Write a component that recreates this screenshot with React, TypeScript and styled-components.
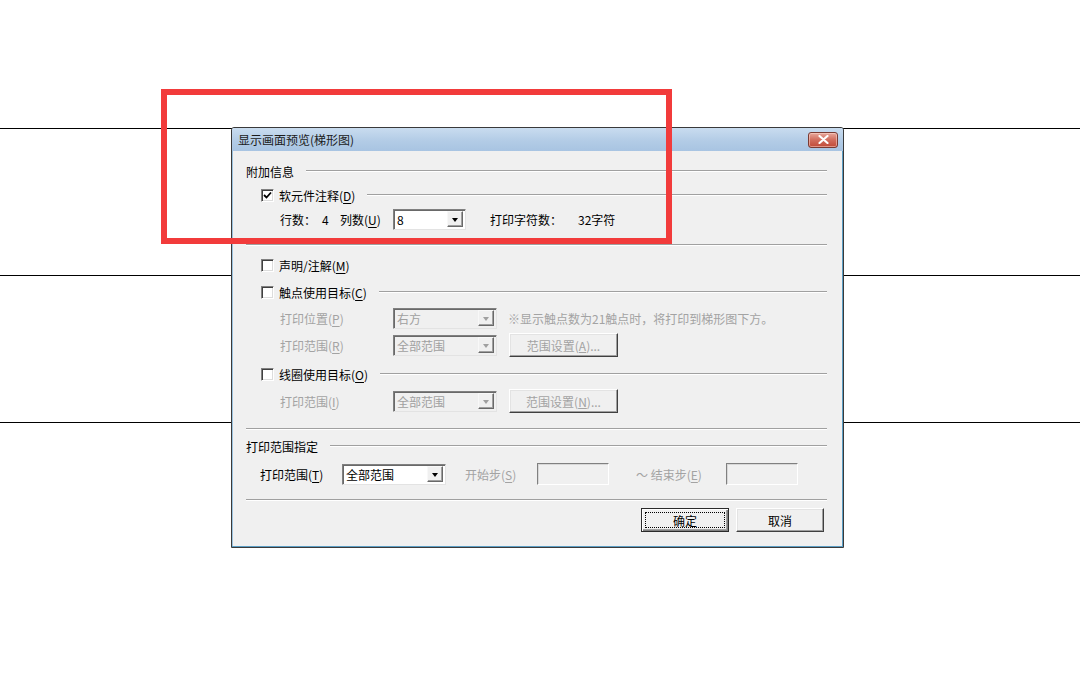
import React from "react";
import styled, { createGlobalStyle, css } from "styled-components";

const GlobalStyle = createGlobalStyle`
    html, body {
        margin: 0;
        padding: 0;
        background: #ffffff;
    }
    body {
        font-family: "Noto Sans CJK SC", "Liberation Sans", sans-serif;
        font-size: 12px;
        color: #000;
    }
`;

const Page = styled.div`
    position: relative;
    width: 1080px;
    height: 683px;
    overflow: hidden;
    background:
        linear-gradient(#000, #000) 0 128px / 100% 1px no-repeat,
        linear-gradient(#000, #000) 0 275px / 100% 1px no-repeat,
        linear-gradient(#000, #000) 0 422px / 100% 1px no-repeat,
        #ffffff;
`;

const Highlight = styled.div`
    position: absolute;
    left: 161px;
    top: 89px;
    width: 511px;
    height: 155px;
    box-sizing: border-box;
    border: 6px solid #f23b3b;
    z-index: 2;
    pointer-events: none;
`;

const Window = styled.div`
    position: absolute;
    left: 231px;
    top: 127px;
    width: 613px;
    height: 421px;
    box-sizing: border-box;
    border: 1px solid #3a3a3a;
    border-radius: 3px 3px 0 0;
    background: #f0f0f0;
    box-shadow: inset -1px -1px 0 #5c9ec4, inset 1px 0 0 #9cc3de;
    display: flex;
    flex-direction: column;
`;

const TitleBar = styled.div`
    height: 23px;
    flex-shrink: 0;
    display: flex;
    align-items: center;
    padding: 0 5px 0 6px;
    background: linear-gradient(#c9dcef, #b3cce6 55%, #a8c4e2);
    border-radius: 2px 2px 0 0;
`;

const Title = styled.span`
    flex: 1;
    font-size: 12px;
    color: #1b1b1b;
    line-height: 23px;
`;

const CloseButton = styled.div`
    width: 30px;
    height: 16px;
    box-sizing: border-box;
    border: 1px solid #7a3a32;
    border-radius: 3px;
    background: linear-gradient(#e8a89c, #d16c5c 50%, #c14a38);
    display: flex;
    align-items: center;
    justify-content: center;
    box-shadow: inset 0 0 0 1px rgba(255, 220, 210, 0.5);
`;

const Body = styled.div`
    flex: 1;
    padding: 10px 16px 0 14px;
    display: flex;
    flex-direction: column;
`;

const Row = styled.div<{ $h?: number; $mt?: number; $indent?: number; $end?: boolean }>`
    display: flex;
    align-items: center;
    height: ${p => p.$h ?? 20}px;
    margin-top: ${p => p.$mt ?? 0}px;
    padding-left: ${p => p.$indent ?? 0}px;
    flex-shrink: 0;
    ${p => p.$end && css`
        justify-content: flex-end;
        padding-right: 3px;
    `}
`;

const GroupLine = styled.div`
    flex: 1;
    height: 0;
    margin-left: 12px;
    border-top: 1px solid #a0a0a0;
    border-bottom: 1px solid #ffffff;
`;

const Separator = styled.div<{ $mt: number }>`
    height: 0;
    margin-top: ${p => p.$mt}px;
    border-top: 1px solid #a0a0a0;
    border-bottom: 1px solid #ffffff;
    flex-shrink: 0;
`;

const Label = styled.span<{ $disabled?: boolean; $w?: number }>`
    white-space: nowrap;
    color: ${p => (p.$disabled ? "#a3a3a3" : "#000")};
    ${p => p.$w !== undefined && css`
        width: ${p.$w}px;
        flex-shrink: 0;
    `}
    u {
        text-decoration: underline;
        text-underline-offset: 2px;
    }
`;

const Box = styled.span`
    width: 13px;
    height: 13px;
    box-sizing: border-box;
    margin-right: 5px;
    flex-shrink: 0;
    background: #ffffff;
    border-top: 1px solid #808080;
    border-left: 1px solid #808080;
    border-right: 1px solid #ffffff;
    border-bottom: 1px solid #ffffff;
    box-shadow: inset 1px 1px 0 #404040, inset -1px -1px 0 #dcdcdc;
    display: flex;
    align-items: center;
    justify-content: center;
`;

const Combo = styled.div<{ $w: number; $disabled?: boolean }>`
    width: ${p => p.$w}px;
    height: 21px;
    box-sizing: border-box;
    flex-shrink: 0;
    display: flex;
    align-items: center;
    border-top: 1px solid #808080;
    border-left: 1px solid #808080;
    border-right: 1px solid #e3e3e3;
    border-bottom: 1px solid #e3e3e3;
    box-shadow: inset 1px 1px 0 #696969;
    background: ${p => (p.$disabled ? "#f0f0f0" : "#ffffff")};
    color: ${p => (p.$disabled ? "#a0a0a0" : "#000")};
    padding: 2px 2px 2px 3px;
`;

const ComboText = styled.span`
    flex: 1;
    white-space: nowrap;
    line-height: 15px;
`;

const ComboArrow = styled.span<{ $disabled?: boolean }>`
    width: 16px;
    height: 16px;
    box-sizing: border-box;
    background: #f0f0f0;
    border-top: 1px solid #f8f8f8;
    border-left: 1px solid #f8f8f8;
    border-right: 1px solid #696969;
    border-bottom: 1px solid #696969;
    box-shadow: inset -1px -1px 0 #a0a0a0;
    display: flex;
    align-items: center;
    justify-content: center;
    &::after {
        content: "";
        border-left: 3px solid transparent;
        border-right: 3px solid transparent;
        border-top: 4px solid ${p => (p.$disabled ? "#a0a0a0" : "#000")};
        margin-top: 1px;
    }
`;

const PushButton = styled.div<{ $w: number; $disabled?: boolean; $default?: boolean }>`
    width: ${p => p.$w}px;
    height: 24px;
    box-sizing: border-box;
    flex-shrink: 0;
    display: flex;
    align-items: center;
    justify-content: center;
    background: #f0f0f0;
    color: ${p => (p.$disabled ? "#a3a3a3" : "#000")};
    border-top: 1px solid #ffffff;
    border-left: 1px solid #ffffff;
    border-right: 1px solid #404040;
    border-bottom: 1px solid #404040;
    box-shadow: inset -1px -1px 0 #a0a0a0, inset 1px 1px 0 #e3e3e3;
    ${p => p.$default && css`
        border: 1px solid #2b2b2b;
        box-shadow: inset 1px 1px 0 #ffffff, inset -1px -1px 0 #808080, inset -2px -2px 0 #a0a0a0;
        position: relative;
        &::before {
            content: "";
            position: absolute;
            inset: 3px;
            border: 1px dotted #000;
        }
    `}
`;

const Edit = styled.div<{ $w: number }>`
    width: ${p => p.$w}px;
    height: 22px;
    box-sizing: border-box;
    flex-shrink: 0;
    background: #f0f0f0;
    border-top: 1px solid #808080;
    border-left: 1px solid #808080;
    border-right: 1px solid #ffffff;
    border-bottom: 1px solid #ffffff;
    box-shadow: inset 1px 1px 0 #d8d8d8;
`;

const CheckMark = () => (
    <svg width="9" height="9" viewBox="0 0 9 9">
        <path d="M1 4 L3.5 6.5 L8 1.5" fill="none" stroke="#000" strokeWidth="1.8" />
    </svg>
);

const CloseX = () => (
    <svg width="11" height="9" viewBox="0 0 11 9">
        <path d="M1.5 1 L9.5 8 M9.5 1 L1.5 8" stroke="#ffffff" strokeWidth="2.2" strokeLinecap="round" />
    </svg>
);

const Check = ({ checked, children }: { checked?: boolean; children: React.ReactNode }) => (
    <>
        <Box>{checked && <CheckMark />}</Box>
        <Label>{children}</Label>
    </>
);

const Dropdown = ({ w, value, disabled }: { w: number; value: string; disabled?: boolean }) => (
    <Combo $w={w} $disabled={disabled}>
        <ComboText>{value}</ComboText>
        <ComboArrow $disabled={disabled} />
    </Combo>
);

export default function App() {
    return (
        <Page>
            <GlobalStyle />
            <Highlight />
            <Window>
                <TitleBar>
                    <Title>显示画面预览(梯形图)</Title>
                    <CloseButton>
                        <CloseX />
                    </CloseButton>
                </TitleBar>
                <Body>
                    <Row>
                        <Label>附加信息</Label>
                        <GroupLine />
                    </Row>
                    <Row $mt={4} $indent={15}>
                        <Check checked>软元件注释(<u>D</u>)</Check>
                        <GroupLine />
                    </Row>
                    <Row $mt={4} $indent={34}>
                        <Label $w={42}>行数：</Label>
                        <Label $w={18}>4</Label>
                        <Label $w={53}>列数(<u>U</u>)</Label>
                        <Dropdown w={73} value="8" />
                        <Label $w={88} style={{ marginLeft: 24 }}>打印字符数：</Label>
                        <Label>32字符</Label>
                    </Row>
                    <Separator $mt={15} />
                    <Row $mt={9} $indent={15}>
                        <Check>声明/注解(<u>M</u>)</Check>
                    </Row>
                    <Row $mt={7} $indent={15}>
                        <Check>触点使用目标(<u>C</u>)</Check>
                        <GroupLine />
                    </Row>
                    <Row $mt={6} $indent={34}>
                        <Label $w={113} $disabled>打印位置(<u>P</u>)</Label>
                        <Dropdown w={104} value="右方" disabled />
                        <Label $disabled style={{ marginLeft: 11 }}>※显示触点数为21触点时，将打印到梯形图下方。</Label>
                    </Row>
                    <Row $h={24} $mt={5} $indent={34}>
                        <Label $w={113} $disabled>打印范围(<u>R</u>)</Label>
                        <Dropdown w={104} value="全部范围" disabled />
                        <span style={{ width: 12 }} />
                        <PushButton $w={109} $disabled>范围设置(<u>A</u>)...</PushButton>
                    </Row>
                    <Row $mt={7} $indent={15}>
                        <Check>线圈使用目标(<u>O</u>)</Check>
                        <GroupLine />
                    </Row>
                    <Row $h={24} $mt={5} $indent={34}>
                        <Label $w={113} $disabled>打印范围(<u>I</u>)</Label>
                        <Dropdown w={104} value="全部范围" disabled />
                        <span style={{ width: 12 }} />
                        <PushButton $w={109} $disabled>范围设置(<u>N</u>)...</PushButton>
                    </Row>
                    <Separator $mt={15} />
                    <Row $mt={6}>
                        <Label>打印范围指定</Label>
                        <GroupLine />
                    </Row>
                    <Row $h={24} $mt={6} $indent={14}>
                        <Label $w={82}>打印范围(<u>T</u>)</Label>
                        <Dropdown w={104} value="全部范围" />
                        <Label $w={72} $disabled style={{ marginLeft: 19 }}>开始步(<u>S</u>)</Label>
                        <Edit $w={72} />
                        <Label $w={90} $disabled style={{ marginLeft: 27 }}>～ 结束步(<u>E</u>)</Label>
                        <Edit $w={72} />
                    </Row>
                    <Separator $mt={13} />
                    <Row $h={24} $mt={7} $end>
                        <PushButton $w={88} $default>确定</PushButton>
                        <span style={{ width: 7 }} />
                        <PushButton $w={88}>取消</PushButton>
                    </Row>
                </Body>
            </Window>
        </Page>
    );
}
